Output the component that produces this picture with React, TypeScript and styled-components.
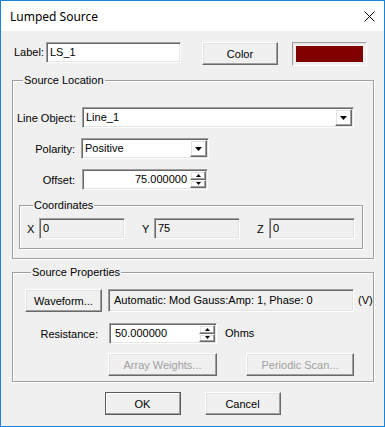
import React from "react";
import styled, { createGlobalStyle, css } from "styled-components";

const GlobalStyle = createGlobalStyle`
  html, body {
    margin: 0;
    padding: 0;
    background: #ffffff;
  }
  body {
    font-family: "Liberation Sans", Arial, sans-serif;
    font-size: 11px;
    color: #000;
  }
  * {
    box-sizing: border-box;
  }
`;

const sunken = css`
  border: 1px solid;
  border-color: #a0a0a0 #ffffff #ffffff #a0a0a0;
  box-shadow: inset 1px 1px #696969, inset -1px -1px #e3e3e3;
`;

const raised = css`
  border: 1px solid;
  border-color: #ffffff #696969 #696969 #ffffff;
  box-shadow: inset -1px -1px #a0a0a0, inset 1px 1px #e3e3e3;
`;

const Window = styled.div`
  width: 385px;
  height: 427px;
  border: 1px solid #1883d7;
  background: #f0f0f0;
  display: flex;
  flex-direction: column;
`;

const TitleBar = styled.div`
  height: 30px;
  background: #ffffff;
  display: flex;
  align-items: center;
  justify-content: space-between;
  padding: 0 9px 0 9px;
`;

const Title = styled.span`
  font-family: "Segoe UI", "Noto Sans", sans-serif;
  font-size: 12px;
  color: #000;
`;

const Body = styled.div`
  flex: 1;
  padding: 11px 0 0 11px;
  display: flex;
  flex-direction: column;
`;

const LabelRow = styled.div`
  display: flex;
  align-items: flex-start;
  padding-left: 2px;
`;

const InlineText = styled.span<{ $h?: number; $mr?: number; $ml?: number }>`
  height: ${(p) => p.$h ?? 21}px;
  line-height: ${(p) => p.$h ?? 21}px;
  margin-right: ${(p) => p.$mr ?? 0}px;
  margin-left: ${(p) => p.$ml ?? 0}px;
  white-space: nowrap;
`;

const Edit = styled.div<{ $w: number; $h?: number; $readOnly?: boolean; $right?: boolean }>`
  ${sunken};
  width: ${(p) => p.$w}px;
  height: ${(p) => p.$h ?? 21}px;
  background: ${(p) => (p.$readOnly ? "#f0f0f0" : "#ffffff")};
  padding: 0 3px;
  line-height: ${(p) => (p.$h ?? 21) - 2}px;
  white-space: nowrap;
  overflow: hidden;
  text-align: ${(p) => (p.$right ? "right" : "left")};
`;

const Button = styled.div<{ $w: number; $ml?: number; $default?: boolean; $disabled?: boolean }>`
  ${raised};
  width: ${(p) => p.$w}px;
  height: 23px;
  margin-left: ${(p) => p.$ml ?? 0}px;
  display: flex;
  align-items: center;
  justify-content: center;
  color: ${(p) => (p.$disabled ? "#a0a0a0" : "#000")};
  ${(p) =>
    p.$default &&
    css`
      border-color: #ffffff #404040 #404040 #ffffff;
      outline: 1px solid #5a5a5a;
      outline-offset: -1px;
      box-shadow: inset -1px -1px #a0a0a0, inset 1px 1px #ffffff;
    `}
`;

const Swatch = styled.div`
  width: 75px;
  height: 24px;
  margin-left: 14px;
  border: 1px solid;
  border-color: #a0a0a0 #ffffff #ffffff #a0a0a0;
  box-shadow: inset 1px 1px #e3e3e3;
  padding: 3px;
  background: #f0f0f0;
`;

const SwatchFill = styled.div`
  width: 100%;
  height: 100%;
  background: #800000;
`;

const Group = styled.fieldset<{ $w: number; $mt: number; $ml?: number; $pad: string }>`
  margin: ${(p) => p.$mt}px 0 0 ${(p) => p.$ml ?? 0}px;
  width: ${(p) => p.$w}px;
  min-width: 0;
  padding: ${(p) => p.$pad};
  border: 1px solid #a0a0a0;
  box-shadow: inset 1px 1px #ffffff, 1px 1px #ffffff;
`;

const Legend = styled.legend<{ $ml: number }>`
  margin-left: ${(p) => p.$ml}px;
  padding: 0 1px;
  line-height: 14px;
  background: #f0f0f0;
`;

const FormRow = styled.div<{ $mt?: number }>`
  display: flex;
  align-items: center;
  margin-top: ${(p) => p.$mt ?? 0}px;
`;

const RowLabel = styled.span<{ $w: number; $mr: number }>`
  width: ${(p) => p.$w}px;
  margin-right: ${(p) => p.$mr}px;
  text-align: right;
  white-space: nowrap;
`;

const Combo = styled.div<{ $w: number }>`
  ${sunken};
  width: ${(p) => p.$w}px;
  height: 21px;
  background: #ffffff;
  display: flex;
  align-items: stretch;
  padding: 1px;
`;

const ComboText = styled.span`
  flex: 1;
  padding-left: 2px;
  line-height: 17px;
`;

const DropButton = styled.div`
  ${raised};
  width: 17px;
  display: flex;
  align-items: center;
  justify-content: center;
`;

const Spin = styled.div<{ $w: number }>`
  ${sunken};
  width: ${(p) => p.$w}px;
  height: 21px;
  background: #ffffff;
  display: flex;
  padding: 1px;
`;

const SpinText = styled.span<{ $right?: boolean }>`
  flex: 1;
  line-height: 17px;
  padding: 0 3px 0 4px;
  text-align: ${(p) => (p.$right ? "right" : "left")};
`;

const SpinButtons = styled.div`
  width: 16px;
  display: flex;
  flex-direction: column;
`;

const SpinButton = styled.div`
  ${raised};
  flex: 1;
  display: flex;
  align-items: center;
  justify-content: center;
`;

const CoordGrid = styled.div`
  display: grid;
  grid-template-columns: repeat(3, 115px);
`;

const CoordCell = styled.div`
  display: flex;
  align-items: center;
`;

const CoordLabel = styled.span`
  width: 12px;
`;

const ButtonBar = styled.div`
  display: flex;
  justify-content: center;
  gap: 24px;
  margin-top: 10px;
  padding-right: 11px;
`;

const DownArrow = () => (
  <svg width="7" height="4" viewBox="0 0 7 4">
    <polygon points="0,0 7,0 3.5,4" fill="#000" />
  </svg>
);

const SmallArrow = ({ up }: { up?: boolean }) => (
  <svg width="5" height="3" viewBox="0 0 5 3">
    <polygon points={up ? "2.5,0 5,3 0,3" : "0,0 5,0 2.5,3"} fill="#000" />
  </svg>
);

const CloseIcon = () => (
  <svg width="11" height="11" viewBox="0 0 11 11">
    <path d="M0.5 0.5 L10.5 10.5 M10.5 0.5 L0.5 10.5" stroke="#000" strokeWidth="1" />
  </svg>
);

const SpinBox = ({ value, width, right }: { value: string; width: number; right?: boolean }) => (
  <Spin $w={width}>
    <SpinText $right={right}>{value}</SpinText>
    <SpinButtons>
      <SpinButton>
        <SmallArrow up />
      </SpinButton>
      <SpinButton>
        <SmallArrow />
      </SpinButton>
    </SpinButtons>
  </Spin>
);

const ComboBox = ({ value, width }: { value: string; width: number }) => (
  <Combo $w={width}>
    <ComboText>{value}</ComboText>
    <DropButton>
      <DownArrow />
    </DropButton>
  </Combo>
);

const coords = [
  { axis: "X", value: "0" },
  { axis: "Y", value: "75" },
  { axis: "Z", value: "0" },
];

export default function App() {
  return (
    <>
      <GlobalStyle />
      <Window>
        <TitleBar>
          <Title>Lumped Source</Title>
          <CloseIcon />
        </TitleBar>
        <Body>
          <LabelRow>
            <InlineText $mr={2}>Label:</InlineText>
            <Edit $w={135}>LS_1</Edit>
            <Button $w={76} $ml={21}>
              Color
            </Button>
            <Swatch>
              <SwatchFill />
            </Swatch>
          </LabelRow>

          <Group $w={362} $mt={7} $pad="20px 0 9px 4px">
            <Legend $ml={6}>Source Location</Legend>
            <FormRow>
              <RowLabel $w={58} $mr={7}>
                Line Object:
              </RowLabel>
              <ComboBox value="Line_1" width={272} />
            </FormRow>
            <FormRow $mt={10}>
              <RowLabel $w={58} $mr={6}>
                Polarity:
              </RowLabel>
              <ComboBox value="Positive" width={128} />
            </FormRow>
            <FormRow $mt={10}>
              <RowLabel $w={58} $mr={7}>
                Offset:
              </RowLabel>
              <SpinBox value="75.000000" width={126} right />
            </FormRow>

            <Group $w={344} $mt={8} $ml={2} $pad="6px 0 9px 7px">
              <Legend $ml={6}>Coordinates</Legend>
              <CoordGrid>
                {coords.map((c) => (
                  <CoordCell key={c.axis}>
                    <CoordLabel>{c.axis}</CoordLabel>
                    <Edit $w={86} $readOnly>
                      {c.value}
                    </Edit>
                  </CoordCell>
                ))}
              </CoordGrid>
            </Group>
          </Group>

          <Group $w={362} $mt={6} $pad="10px 0 5px 12px">
            <Legend $ml={6}>Source Properties</Legend>
            <FormRow>
              <Button $w={77}>Waveform...</Button>
              <Edit $w={246} $h={23} $readOnly style={{ marginLeft: 6, paddingLeft: 5 }}>
                Automatic: Mod Gauss:Amp: 1, Phase: 0
              </Edit>
              <InlineText $ml={4}>(V)</InlineText>
            </FormRow>
            <FormRow $mt={11}>
              <RowLabel $w={73} $mr={11}>
                Resistance:
              </RowLabel>
              <SpinBox value="50.000000" width={108} />
              <InlineText $ml={8}>Ohms</InlineText>
            </FormRow>
            <FormRow $mt={9}>
              <Button $w={109} $ml={83} $disabled>
                Array Weights...
              </Button>
              <Button $w={108} $ml={29} $disabled>
                Periodic Scan...
              </Button>
            </FormRow>
          </Group>

          <ButtonBar>
            <Button $w={76} $default>
              OK
            </Button>
            <Button $w={76}>Cancel</Button>
          </ButtonBar>
        </Body>
      </Window>
    </>
  );
}
